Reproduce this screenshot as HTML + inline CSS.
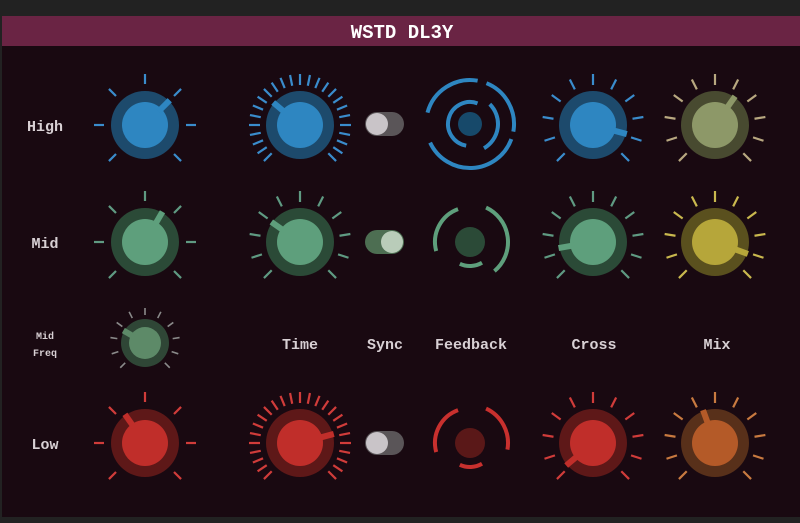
<!DOCTYPE html>
<html><head><meta charset="utf-8">
<style>
html,body{margin:0;padding:0;background:#222;width:800px;height:523px;overflow:hidden}
svg{display:block}
text{font-family:"Liberation Mono","DejaVu Sans Mono",monospace;font-weight:bold}
</style></head>
<body>
<svg id="s" width="800" height="523" xmlns="http://www.w3.org/2000/svg">
<rect x="0" y="0" width="800" height="523" fill="#222"/>
<rect x="2" y="16" width="798" height="501" fill="#190911"/>
<rect x="2" y="16" width="798" height="30" fill="#6a2444"/>
<text x="402" y="38" fill="#fff" font-size="19" text-anchor="middle">WSTD DL3Y</text>
<g fill="#d8d0d4" font-size="15" text-anchor="middle">
<text x="45" y="131">High</text>
<text x="45" y="248">Mid</text>
<text x="45" y="449">Low</text>
<text x="300" y="349">Time</text>
<text x="385" y="349">Sync</text>
<text x="471" y="349">Feedback</text>
<text x="594" y="349">Cross</text>
<text x="717" y="349">Mix</text>
</g>
<g fill="#d8d0d4" font-size="10" text-anchor="middle">
<text x="45" y="339">Mid</text>
<text x="45" y="356">Freq</text>
</g>
<g id="k"></g>
</svg>
<script>
var g=document.getElementById('k'),h='';
function P(cx,cy,r,a){a=a*Math.PI/180;return [cx+r*Math.sin(a),cy-r*Math.cos(a)];}
function knob(cx,cy,R,ri,t1,t2,n,ang,oc,ic,tc,pc,tw){
  for(var i=0;i<n;i++){var a=-135+270*i/(n-1);var p=P(cx,cy,t1,a),q=P(cx,cy,t2,a);
  h+='<line x1="'+p[0]+'" y1="'+p[1]+'" x2="'+q[0]+'" y2="'+q[1]+'" stroke="'+tc+'" stroke-width="'+(tw||2.2)+'"/>';}
  h+='<circle cx="'+cx+'" cy="'+cy+'" r="'+R+'" fill="'+oc+'"/>';
  h+='<circle cx="'+cx+'" cy="'+cy+'" r="'+ri+'" fill="'+ic+'"/>';
  var p=P(cx,cy,ri-4,ang),q=P(cx,cy,R+1,ang);
  h+='<line x1="'+p[0]+'" y1="'+p[1]+'" x2="'+q[0]+'" y2="'+q[1]+'" stroke="'+pc+'" stroke-width="6"/>';
}
function arc(cx,cy,r,a1,a2,c,w){var p=P(cx,cy,r,a1),q=P(cx,cy,r,a2);var l=(a2-a1)>180?1:0;
  h+='<path d="M'+p[0]+' '+p[1]+' A'+r+' '+r+' 0 '+l+' 1 '+q[0]+' '+q[1]+'" fill="none" stroke="'+c+'" stroke-width="'+(w||4)+'"/>';}
var B=['#1d4a6c','#2e86c1','#3a8ccc'],G=['#2b4a37','#5e9f7c','#5f9a82'],Rd=['#5e1818','#c02e2a','#d03c3a'];
// col1
knob(145,125,34,23,41,51,7,45,B[0],B[1],B[2],B[1]);
knob(145,242,34,23,41,51,7,30,G[0],G[1],G[2],G[1]);
knob(145,443,34,23,41,51,7,-35,Rd[0],Rd[1],Rd[2],Rd[1]);
knob(145,343,24,16,28,35,11,-60,'#2f4636','#5d8a68','#8a8a8a','#5d8a68',1.6);
// time
knob(300,125,34,23,40,51,25,-50,B[0],B[1],B[2],B[1]);
knob(300,242,34,23,40,51,11,-55,G[0],G[1],G[2],G[1]);
knob(300,443,34,23,40,51,25,75,Rd[0],Rd[1],Rd[2],Rd[1]);
// cross
knob(593,125,34,23,40,51,11,105,B[0],B[1],B[2],B[1]);
knob(593,242,34,23,40,51,11,-100,G[0],G[1],G[2],G[1]);
knob(593,443,34,23,40,51,11,-130,Rd[0],Rd[1],Rd[2],Rd[1]);
// mix
knob(715,125,34,23,40,51,11,35,'#484a30','#8d9868','#b8a880','#8d9868');
knob(715,242,34,23,40,51,11,110,'#5a501e','#b6a63a','#c9b84e','#b6a63a');
knob(715,443,34,23,40,51,11,-20,'#58301a','#b45a28','#c87a40','#b45a28');
// toggles
function tog(y,on,tr,kc){h+='<rect x="365" y="'+(y-12)+'" width="39" height="24" rx="12" fill="'+tr+'"/>';
 h+='<circle cx="'+(on?392:377)+'" cy="'+y+'" r="11" fill="'+kc+'"/>';}
tog(124,0,'#5a5558','#c9c4c8');tog(242,1,'#4d6e52','#b9ccb9');tog(443,0,'#5a5558','#c9c4c8');
// feedback
h+='<circle cx="470" cy="124" r="12" fill="#17496a"/>';
arc(470,124,22,190,380,'#2e86c1');arc(470,124,28,45,150,'#2e86c1');
arc(470,124,44,-75,10,'#2e86c1');arc(470,124,44,110,245,'#2e86c1');arc(470,124,44,22,100,'#2e86c1');
h+='<circle cx="470" cy="242" r="15" fill="#2b4a37"/>';
arc(470,242,35,-105,-20,'#5e9f7c');arc(470,242,38,25,140,'#5e9f7c');arc(470,242,24,150,205,'#5e9f7c');
h+='<circle cx="470" cy="443" r="15" fill="#5a1818"/>';
arc(470,443,35,-105,-20,'#c8302e');arc(470,443,38,25,100,'#c8302e');arc(470,443,24,150,205,'#c8302e');
g.innerHTML=h;
</script>
</body></html>
